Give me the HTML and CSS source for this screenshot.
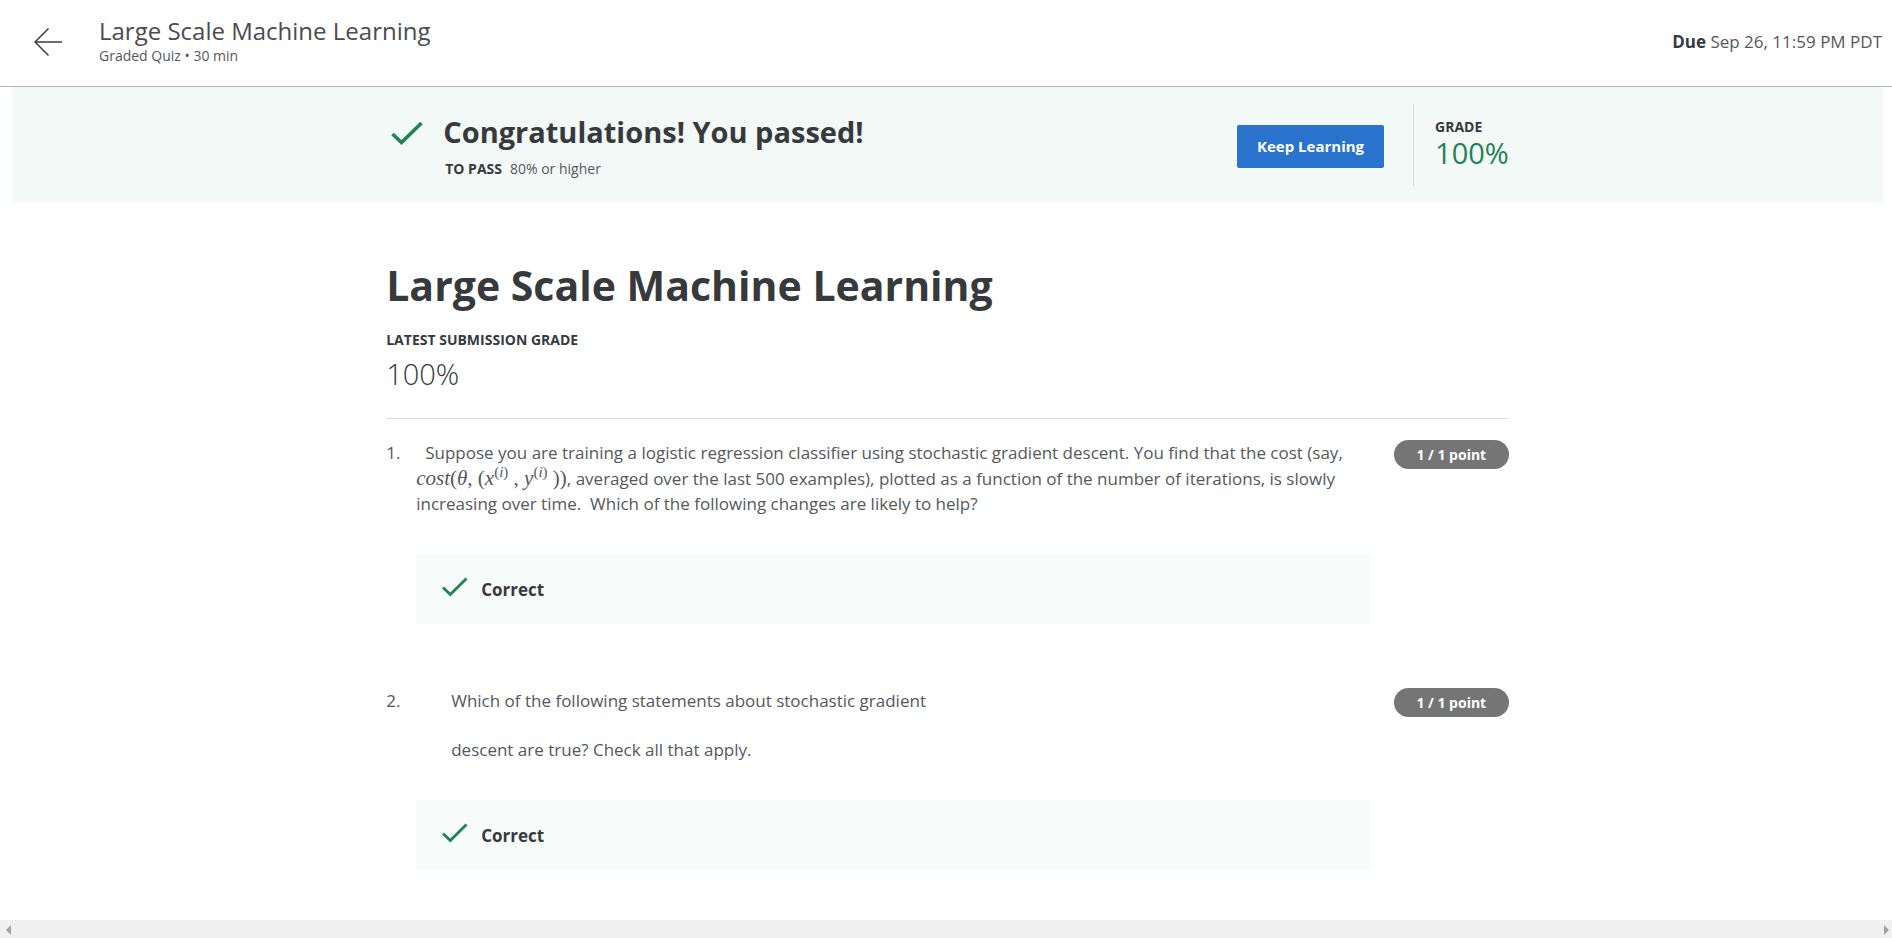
FILE: index.html
```html
<!DOCTYPE html>
<html lang="en">
<head>
<meta charset="utf-8">
<title>Large Scale Machine Learning</title>
<link rel="stylesheet" href="styles.css">
</head>
<body>
<header class="topbar">
  <button class="back" type="button" aria-label="Back">
    <svg width="28" height="28" viewBox="0 0 28 28" fill="none" stroke="#3c3c3c" stroke-width="1.5"><path d="M28 14H1M14.500 0.500L1 14l13.500 13.500"/></svg>
  </button>
  <div class="topbar-text">
    <div class="topbar-title">Large Scale Machine Learning</div>
    <div class="topbar-sub">Graded Quiz • 30 min</div>
  </div>
  <div class="due"><b>Due</b> Sep 26, 11:59 PM PDT</div>
</header>
<main class="shell">
  <section class="banner">
    <div class="column banner-row">
      <svg class="banner-check" width="32" height="25" viewBox="0 0 32 25" fill="none" stroke="#1f8354" stroke-width="3.600"><path d="M1.500 13L10.500 21.500L30.500 2"/></svg>
      <div class="banner-text">
        <h2 class="banner-title">Congratulations! You passed!</h2>
        <p class="to-pass"><b>TO PASS</b><span>80% or higher</span></p>
      </div>
      <button class="keep" type="button">Keep Learning</button>
      <div class="grade">
        <div class="label">GRADE</div>
        <div class="grade-value">100%</div>
      </div>
    </div>
  </section>
  <div class="column">
    <div class="quiz-head">
      <h1 class="quiz-title">Large Scale Machine Learning</h1>
      <div class="label">LATEST SUBMISSION GRADE</div>
      <div class="latest">100%</div>
    </div>
    <section class="question">
      <div class="number">1.</div>
      <div class="prompt"><p class="indent">Suppose you are training a logistic regression classifier using stochastic gradient descent. You find that the cost (say, <span class="math"><i>cost</i>(<i>θ</i>, (<i>x</i><sup>(<i>i</i>)</sup> , <i>y</i><sup>(<i>i</i>)</sup> ))</span>, averaged over the last 500 examples), plotted as a function of the number of iterations, is slowly increasing over time.&nbsp; Which of the following changes are likely to help?</p></div>
      <div class="points">1 / 1 point</div>
      <div class="correct">
        <svg class="check" width="26" height="20" viewBox="0 0 26 20" fill="none" stroke="#1f8354" stroke-width="2.800"><path d="M1 10.500L8.300 17.500L24.500 1.500"/></svg>
        <span>Correct</span>
      </div>
    </section>
    <section class="question second">
      <div class="number">2.</div>
      <div class="prompt quoted"><p>Which of the following statements about stochastic gradient</p><p>descent are true? Check all that apply.</p></div>
      <div class="points">1 / 1 point</div>
      <div class="correct">
        <svg class="check" width="26" height="20" viewBox="0 0 26 20" fill="none" stroke="#1f8354" stroke-width="2.800"><path d="M1 10.500L8.300 17.500L24.500 1.500"/></svg>
        <span>Correct</span>
      </div>
    </section>
  </div>
</main>
<div class="scrollbar">
  <svg width="5" height="10" viewBox="0 0 5 10" fill="#a3a3a3"><path d="M5 0v10L0 5z"/></svg>
  <svg width="5" height="10" viewBox="0 0 5 10" fill="#a3a3a3"><path d="M0 0v10L5 5z"/></svg>
</div>
</body>
</html>
```
FILE: styles.css
```css
* { box-sizing: border-box; }
body {
  margin: 0;
  min-height: 100vh;
  display: flex;
  flex-direction: column;
  background: #fff;
  color: #373a3c;
  font: 400 17px/25px "Open Sans", sans-serif;
}
h1, h2, p { margin: 0; }
button { font: inherit; border: 0; cursor: pointer; }
.topbar {
  display: flex;
  align-items: center;
  height: 87px;
  padding: 0 10px 3px 34px;
  border-bottom: 1px solid #b4b4b4;
}
.back { display: flex; padding: 0; margin-right: 37px; background: none; }
.topbar-text { flex: 1; padding-bottom: 3px; }
.topbar-title { font-size: 24px; line-height: 32px; color: #4a4c4e; }
.topbar-sub { font-size: 14px; line-height: 18px; color: #55585a; }
.due { color: #55585a; }
b { color: #373a3c; }
.shell { flex: 1; padding: 0 9px 0 12px; }
.column { width: 60%; margin: 0 auto; }
.banner { background: #f3f9f7; }
.banner-row { display: flex; align-items: center; height: 115px; }
.banner-check { margin: 0 20px 22px 5px; }
.banner-text { flex: 1; padding-top: 2px; }
.banner-title { font-size: 29px; line-height: 40px; font-weight: 700; }
.to-pass { display: flex; gap: 8px; padding: 6px 0 0 2px; font-size: 14px; line-height: 22px; color: #55585a; }
.keep {
  height: 43px;
  margin: 3px 29px 0 0;
  padding: 0 20px;
  border-radius: 2px;
  background: #2a73cc;
  color: #fff;
  font-size: 15px;
  font-weight: 700;
}
.grade { height: 82px; padding: 14px 0 0 21px; border-left: 1px solid #d8dedc; }
.label { font-size: 14px; line-height: 18px; font-weight: 700; }
.grade-value { font-size: 29px; line-height: 34px; color: #1f8354; }
.quiz-head { padding: 53px 0 24px; border-bottom: 1px solid #dcdcdc; }
.quiz-title { margin-bottom: 16px; font-size: 41px; line-height: 60px; font-weight: 700; }
.latest { margin-top: 5px; font-size: 29px; line-height: 40px; font-weight: 300; }
.question {
  display: grid;
  grid-template-columns: 30px 1fr 115px;
  padding-top: 21px;
}
.question.second { padding-top: 64px; }
.number, .prompt { color: #55585a; }
.prompt { padding-right: 24px; }
.indent { text-indent: 9px; }
.quoted { padding-left: 35px; }
.quoted p + p { margin-top: 24px; }
.math { font: 21px/26px "Liberation Serif", serif; white-space: nowrap; }
.math sup { font-size: 15px; line-height: 1px; }
.points {
  height: 29px;
  border-radius: 15px;
  background: #757575;
  color: #fff;
  font-size: 14px;
  line-height: 29px;
  font-weight: 700;
  text-align: center;
}
.correct {
  grid-column: 2;
  display: flex;
  align-items: center;
  gap: 13px;
  height: 70px;
  margin: 38px 24px 0 0;
  padding-left: 26px;
  background: #f7fbfa;
  font-weight: 700;
}
.check { margin-bottom: 4px; }
.scrollbar {
  display: flex;
  align-items: center;
  justify-content: space-between;
  height: 18px;
  padding: 2px 3px 0 6px;
  background: #f0f0f0;
}
```
